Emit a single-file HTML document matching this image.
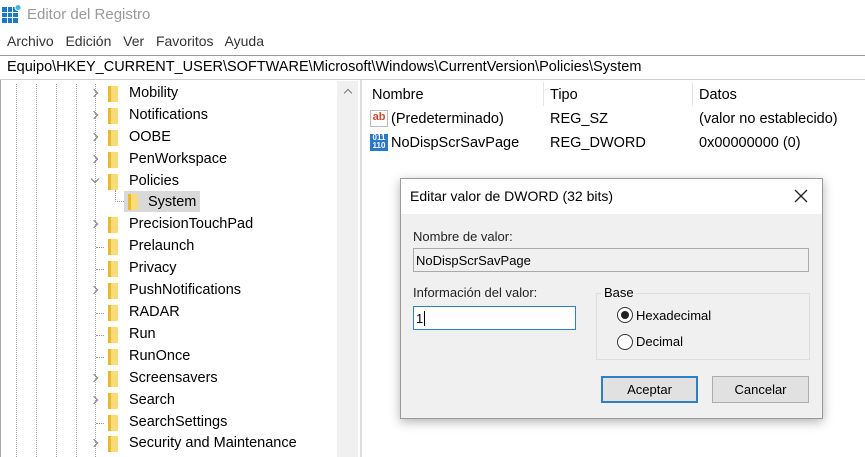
<!DOCTYPE html>
<html><head><meta charset="utf-8"><style>
*{margin:0;padding:0;box-sizing:border-box}
body{width:865px;height:457px;overflow:hidden;background:#fff;font-family:"Liberation Sans",sans-serif;color:#000;position:relative}
.a{position:absolute;white-space:nowrap}
.t{font-size:14.5px}
.fold{position:absolute;width:10px;height:16px;background:linear-gradient(90deg,#e8b830 0 3px,#f9dc78 3px);}
.chev{position:absolute;width:6px;height:6px;border-right:1.3px solid #777;border-top:1.3px solid #777;transform:rotate(45deg)}
.vl{position:absolute;top:84px;height:373px;border-left:1px dotted #a0a0a0}
.d{font-size:13px}
</style></head><body>
<svg class="a" style="left:2px;top:4px" width="20" height="20" viewBox="0 0 20 20"><rect x="0" y="3" width="16" height="16" fill="#1a79c4"/><g stroke="#fff" stroke-width="1"><line x1="5.5" y1="3" x2="5.5" y2="19"/><line x1="10.5" y1="3" x2="10.5" y2="19"/><line x1="0" y1="8.5" x2="16" y2="8.5"/><line x1="0" y1="13.5" x2="16" y2="13.5"/></g><circle cx="16" cy="3.5" r="3" fill="#45b5e8" stroke="#fff"/></svg>
<div class="a" style="left:27px;top:6px;font-size:15px;color:#9a9a9a">Editor del Registro</div>
<div class="a" style="left:7px;top:33px;font-size:14px;color:#333;word-spacing:2px">Archivo&nbsp; Edición&nbsp; Ver&nbsp; Favoritos&nbsp; Ayuda</div>
<div class="a" style="left:0;top:55px;width:865px;height:25px;border-top:1px solid #9a9a9a;border-bottom:1px solid #ccc"></div>
<div class="a" style="left:7px;top:59px;font-size:14.5px">Equipo\HKEY_CURRENT_USER\SOFTWARE\Microsoft\Windows\CurrentVersion\Policies\System</div>
<div class="a" style="left:0;top:80px;width:1px;height:377px;background:#aaa"></div>
<div class="vl" style="left:16px"></div><div class="vl" style="left:36px"></div><div class="vl" style="left:56px"></div><div class="vl" style="left:76px"></div><div class="vl" style="left:95px"></div>
<div class="a" style="left:337px;top:81px;width:21px;height:376px;background:#f0f0f0"></div>
<div class="chev" style="left:345px;top:90px;transform:rotate(-45deg)"></div>
<div class="a" style="left:360px;top:80px;width:2px;height:377px;background:#ddd"></div>
<div class="a" style="left:124px;top:191px;width:76px;height:21px;background:#d9d9d9"></div>
<div class="a" style="left:115px;top:190px;height:12px;border-left:1px dotted #999"></div>
<div class="a" style="left:115px;top:201px;width:9px;border-top:1px dotted #999"></div>
<div class="fold" style="left:128px;top:194px"></div>
<div class="a t" style="left:148px;top:194px">System</div>
<div id="tree"></div>
<div class="a t" style="left:372px;top:87px">Nombre</div>
<div class="a" style="left:543px;top:82px;height:24px;border-left:1px solid #e5e5e5"></div>
<div class="a t" style="left:550px;top:87px">Tipo</div>
<div class="a" style="left:692px;top:82px;height:24px;border-left:1px solid #e5e5e5"></div>
<div class="a t" style="left:699px;top:87px">Datos</div>
<div class="a" style="left:370px;top:110px;width:18px;height:17px;border:1px solid #bbb;background:#fff;color:#d24a2a;font-size:11px;font-weight:bold;line-height:13px;text-align:center">ab</div>
<div class="a t" style="left:391px;top:111px">(Predeterminado)</div>
<div class="a t" style="left:550px;top:111px">REG_SZ</div>
<div class="a t" style="left:699px;top:111px">(valor no establecido)</div>
<div class="a" style="left:370px;top:134px;width:18px;height:17px;background:#2a78c8;color:#fff;font-size:8px;line-height:8px;text-align:center;font-weight:bold">011<br>110</div>
<div class="a t" style="left:391px;top:135px">NoDispScrSavPage</div>
<div class="a t" style="left:550px;top:135px">REG_DWORD</div>
<div class="a t" style="left:699px;top:135px">0x00000000 (0)</div>
<div class="a" style="left:400px;top:178px;width:423px;height:241px;background:#f0f0f0;border:1px solid #9a9a9a;box-shadow:0 3px 10px rgba(0,0,0,.3)"></div>
<div class="a" style="left:401px;top:179px;width:421px;height:35px;background:#fff"></div>
<div class="a" style="left:410px;top:188px;font-size:14px">Editar valor de DWORD (32 bits)</div>
<svg class="a" style="left:794px;top:189px" width="14" height="14"><path d="M1 1L13 13M13 1L1 13" stroke="#222" stroke-width="1.3"/></svg>
<div class="a d" style="left:413px;top:229px;color:#222">Nombre de valor:</div>
<div class="a" style="left:413px;top:248px;width:396px;height:24px;border:1px solid #aaa;background:#f0f0f0"></div>
<div class="a d" style="left:416px;top:253px">NoDispScrSavPage</div>
<div class="a d" style="left:413px;top:285px;color:#222">Información del valor:</div>
<div class="a" style="left:413px;top:306px;width:163px;height:24px;border:1px solid #2f7fc4;background:#fff"></div>
<div class="a d" style="left:416px;top:311px">1<span style="border-left:1px solid #000;margin-left:1px"></span></div>
<div class="a" style="left:596px;top:293px;width:214px;height:67px;border:1px solid #ddd"></div>
<div class="a d" style="left:602px;top:285px;background:#f0f0f0;padding:0 2px">Base</div>
<div class="a" style="left:617px;top:307px;width:16px;height:16px;border:1px solid #333;border-radius:50%;background:#fff"></div>
<div class="a" style="left:621px;top:311px;width:8px;height:8px;border-radius:50%;background:#222"></div>
<div class="a d" style="left:636px;top:308px">Hexadecimal</div>
<div class="a" style="left:617px;top:334px;width:16px;height:16px;border:1px solid #333;border-radius:50%;background:#fff"></div>
<div class="a d" style="left:636px;top:334px">Decimal</div>
<div class="a d" style="left:601px;top:376px;width:97px;height:27px;border:2px solid #2f7fc4;background:#e1e1e1;text-align:center;line-height:23px">Aceptar</div>
<div class="a d" style="left:712px;top:376px;width:97px;height:27px;border:1px solid #adadad;background:#e1e1e1;text-align:center;line-height:25px">Cancelar</div>
<script>
var n=[["Mobility",1],["Notifications",1],["OOBE",1],["PenWorkspace",1],["Policies",2],[null],["PrecisionTouchPad",1],["Prelaunch",0],["Privacy",0],["PushNotifications",1],["RADAR",0],["Run",0],["RunOnce",0],["Screensavers",1],["Search",1],["SearchSettings",0],["Security and Maintenance",1]];
var h="";n.forEach(function(r,i){if(!r[0])return;var y=85+i*21.9;
h+='<div class="fold" style="left:108px;top:'+(y+1)+'px"></div><div class="a t" style="left:129px;top:'+y+'px">'+r[0]+'</div>';
if(r[1]==1)h+='<div class="chev" style="left:91px;top:'+(y+5)+'px"></div>';
else if(r[1]==2)h+='<div class="chev" style="left:92px;top:'+(y+3)+'px;transform:rotate(135deg)"></div>';
else h+='<div class="a" style="left:96px;top:'+(y+9)+'px;width:8px;border-top:1px dotted #999"></div>';});
document.getElementById("tree").innerHTML=h;
</script>
</body></html>
